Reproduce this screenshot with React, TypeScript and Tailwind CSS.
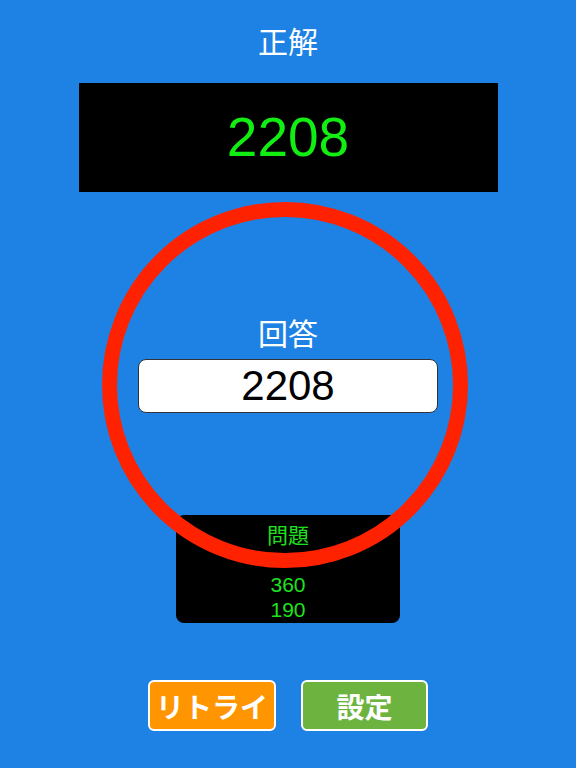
import React from 'react'

const jp = "font-['Noto_Sans_CJK_JP','Noto_Sans',sans-serif]"
const num = "font-['Liberation_Sans',Arial,sans-serif]"

const problems = ['400', '360', '190']

export default function App() {
    return (
        <div className="relative w-full h-[768px] bg-[#1e82e4] flex flex-col items-center overflow-hidden">
            <p className={`${jp} pt-[22px] text-[30px] leading-[36px] text-white`}>正解</p>
            <div className="mt-[25px] w-[419px] h-[109px] bg-black flex items-center justify-center">
                <span className={`${num} text-[55px] leading-none text-[#11ee11]`}>2208</span>
            </div>

            <p className={`${jp} mt-[122px] text-[30px] leading-[36px] text-white`}>回答</p>
            <div className="mt-[9px] w-[300px] h-[54px] bg-white border border-[#333] rounded-lg flex items-center justify-center">
                <span className={`${num} text-[42px] leading-none text-black`}>2208</span>
            </div>

            <div className="mt-[102px] w-[224px] h-[108px] bg-black rounded-lg pt-[7px] flex flex-col items-center text-[21px] leading-[25px] text-[#1fe01f]">
                <span className={jp}>問題</span>
                {problems.map((p) => (
                    <span key={p} className={num}>
                        {p}
                    </span>
                ))}
            </div>

            <div className="mt-[57px] flex gap-[25px]">
                <button
                    className={`${jp} w-[128px] h-[51px] bg-[#ff9500] border-2 border-white rounded-md text-white font-bold text-[28px] leading-none flex items-center justify-center`}
                >
                    リトライ
                </button>
                <button
                    className={`${jp} w-[127px] h-[51px] bg-[#6cb43f] border-2 border-white rounded-md text-white font-bold text-[28px] leading-none flex items-center justify-center`}
                >
                    設定
                </button>
            </div>

            {/* result mark drawn over the answer */}
            <div className="absolute left-[102px] top-[202px] w-[366px] h-[366px] rounded-full border-[15px] border-[#ff2200] pointer-events-none"></div>
        </div>
    )
}
